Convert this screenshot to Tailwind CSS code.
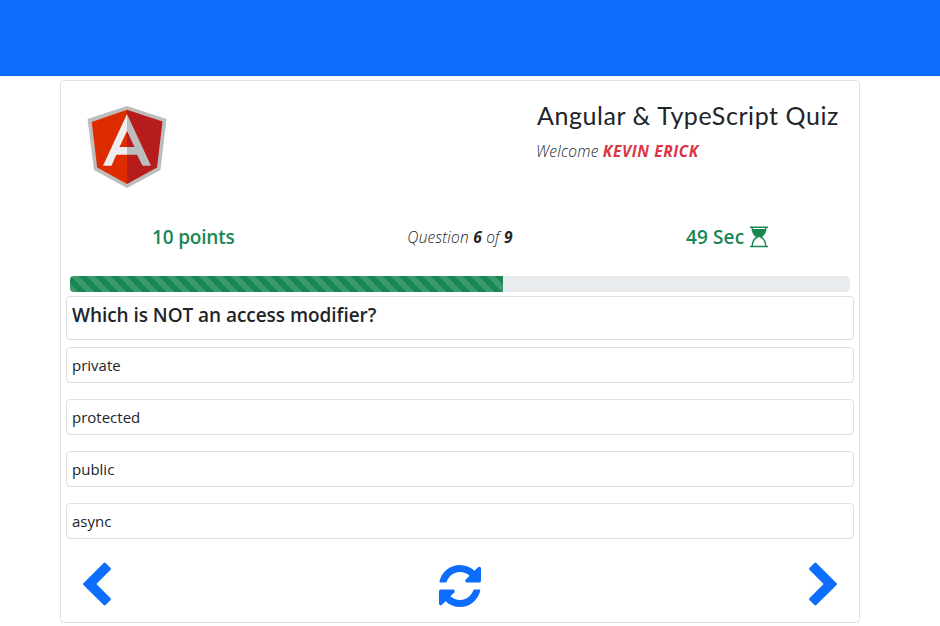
<!DOCTYPE html>
<html lang="en">
<head>
<meta charset="utf-8">
<title>Angular &amp; TypeScript Quiz</title>
<script src="https://cdn.jsdelivr.net/npm/@tailwindcss/browser@4"></script>
</head>
<body class="h-[626px] overflow-hidden bg-white font-['Segoe_UI','Open_Sans',sans-serif] text-base leading-6 text-[#212529]">
<header class="h-[76px] bg-[#0d6efd]"></header>
<main class="ml-[60px] mt-1 flex h-[543px] w-[800px] flex-col rounded border border-[#dfdfdf] px-[5px]">
  <section class="flex h-[138px] justify-between pt-[23px] pl-5">
    <svg class="h-[86px] w-[82px]" viewBox="86 104 82 86" role="img" aria-label="Angular">
      <path fill="#bdbdbd" d="M127 106 166.5 119 160.5 170 127 188 94 170 87.5 119Z"/>
      <path fill="#dd2c00" d="M127 109.8 91.7 122 97.2 167.5 127 184Z"/>
      <path fill="#b71c1c" d="M127 109.8 162.5 121.6 157 167.5 127 184Z"/>
      <path fill="#eee" d="M127 114 103 165.7H111.5L116.3 154.7H127V147H119.5L127 131Z"/>
      <path fill="#bdbdbd" d="M127 114 151 165.7H142.5L137 154.7H127V147H134.5L127 131Z"/>
    </svg>
    <div class="w-[318px] -mt-[5px]">
      <h1 class="h-10 pl-px font-['Comic_Sans_MS','Lato',sans-serif] text-[25px] leading-8 tracking-[0.57px] whitespace-nowrap">Angular &amp; TypeScript Quiz</h1>
      <p class="text-[15.500px] leading-6 font-[350] italic tracking-[0.25px] whitespace-nowrap">Welcome <b class="font-bold tracking-[0.6px] text-[#dc3545]">KEVIN ERICK</b></p>
    </div>
  </section>
  <section class="grid h-[57px] grid-cols-3 text-center">
    <div class="pt-[6px] pr-[8px] text-[19px] font-semibold tracking-[-0.2px] text-[#198754]">10 points</div>
    <div class="pt-[6px] text-[15.500px] font-[350] italic tracking-[0.2px]">Question <b class="font-bold">6</b> of <b class="font-bold">9</b></div>
    <div class="flex justify-center gap-[6px] pt-[6px] pl-[9px] text-[19px] font-semibold tracking-[0.1px] text-[#198754]">49 Sec
      <svg class="mt-[1px] h-[22px] w-[18px]" viewBox="0 0 18 22" fill="none" stroke="#198754">
        <path stroke-width="1.4" d="M0 1.2H18M0 20.5H18M2.2 1.5C2.2 7 4.5 9.6 7.3 11 4.5 12.4 2.2 15 2.2 20.5M15.8 1.5C15.8 7 13.5 9.6 10.7 11 13.5 12.4 15.8 15 15.8 20.5"/>
        <path fill="#198754" stroke="none" d="M2.5 3H15.5C15 7 13 9.5 10.5 11H7.5C5 9.5 3 7 2.5 3Z"/>
      </svg>
    </div>
  </section>
  <div class="mx-[4px] h-4 shrink-0 overflow-hidden rounded bg-[#e9ecef]">
    <div class="h-full w-[433px] bg-[#198754] bg-[linear-gradient(45deg,rgba(255,255,255,.15)_25%,transparent_25%,transparent_50%,rgba(255,255,255,.15)_50%,rgba(255,255,255,.15)_75%,transparent_75%,transparent)] bg-size-[16px_16px]"></div>
  </div>
  <h2 class="mt-1 h-11 shrink-0 rounded border border-[#dfdfdf] pl-[5px] pt-[6px] text-[19px] font-semibold leading-6 tracking-[-0.05px]">Which is NOT an access modifier?</h2>
  <ul class="mt-[7px] flex flex-col gap-4">
    <li class="h-9 rounded border border-[#dfdfdf] px-[5px] pt-[5px] text-[15px]">private</li>
    <li class="h-9 rounded border border-[#dfdfdf] px-[5px] pt-[5px] text-[15px]">protected</li>
    <li class="h-9 rounded border border-[#dfdfdf] px-[5px] pt-[5px] text-[15px]">public</li>
    <li class="h-9 rounded border border-[#dfdfdf] px-[5px] pt-[5px] text-[15px]">async</li>
  </ul>
  <nav class="mt-[22px] flex justify-between px-4 text-[#0d6efd]">
    <button aria-label="Previous"><svg class="h-[46px] w-[30px]" viewBox="0 0 30 46" fill="currentColor"><path d="M1.4 22.2 21.7 1.9Q22.6 1.1 23.5 1.9L28.6 7Q29.4 7.9 28.6 8.8L14.4 23 28.6 37.2Q29.4 38.1 28.6 39L23.5 44.1Q22.6 44.9 21.7 44.1L1.4 23.9Q.6 23 1.4 22.2Z"/></svg></button>
    <button aria-label="Restart"><svg class="mt-[3px] h-[42px] w-[42px]" viewBox="0 0 1536 1536" fill="currentColor"><path d="M1511 928q0 5-1 7-64 268-268 434.500T764 1536q-146 0-282.500-55T238 1324l-129 129q-19 19-45 19t-45-19-19-45V960q0-26 19-45t45-19h448q26 0 45 19t19 45-19 45l-137 137q71 66 161 102t187 36q134 0 250-65t186-179q11-17 53-117 8-23 30-23h192q13 0 22.500 9.500t9.500 22.500zm25-800v448q0 26-19 45t-45 19h-448q-26 0-45-19t-19-45 19-45l138-138Q969 256 768 256q-134 0-250 65T332 500q-11 17-53 117-8 23-30 23H50q-13 0-22.500-9.500T18 608v-7q65-268 270-434.500T768 0q146 0 284 55.500T1297 212l130-129q19-19 45-19t45 19 19 45z"/></svg></button>
    <button aria-label="Next"><svg class="h-[46px] w-[30px]" viewBox="0 0 30 46" fill="currentColor"><path d="M28.600 22.200 8.300 1.900Q7.400 1.100 6.500 1.900L1.400 7Q.6 7.900 1.400 8.800L15.600 23 1.400 37.200Q.6 38.100 1.400 39L6.500 44.100Q7.400 44.900 8.300 44.100L28.600 23.900Q29.400 23 28.600 22.200Z"/></svg></button>
  </nav>
</main>
</body>
</html>
